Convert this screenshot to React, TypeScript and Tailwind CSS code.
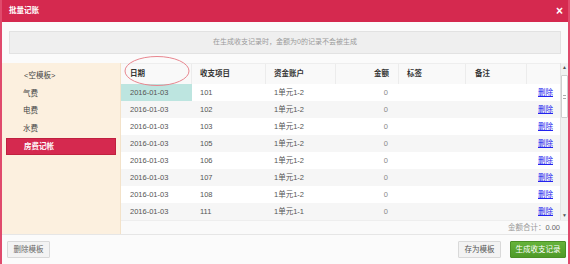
import React from 'react';

const templates = ['<空模板>', '气费', '电费', '水费', '房费记帐'];

const rows = [
  { date: '2016-01-03', item: '101', account: '1单元1-2' },
  { date: '2016-01-03', item: '102', account: '1单元1-2' },
  { date: '2016-01-03', item: '103', account: '1单元1-2' },
  { date: '2016-01-03', item: '105', account: '1单元1-2' },
  { date: '2016-01-03', item: '106', account: '1单元1-2' },
  { date: '2016-01-03', item: '107', account: '1单元1-2' },
  { date: '2016-01-03', item: '108', account: '1单元1-2' },
  { date: '2016-01-03', item: '111', account: '1单元1-1' },
];

const font = { fontFamily: '"Liberation Sans", "Noto Sans CJK SC", sans-serif' };

export default function App() {
  return (
    <div
      className="relative w-[570px] h-[264px] flex flex-col bg-[#fbfbfb] border-l-2 border-r-2 border-[#e04a6c] text-[7.5px] text-[#555] overflow-hidden"
      style={font}
    >
      {/* title bar */}
      <div className="h-[22px] -mx-[2px] bg-[#d5294f] flex items-center justify-between pl-[9px] pr-[7px] shrink-0">
        <span className="text-white font-bold">批量记账</span>
        <span className="text-white font-bold text-[12px] leading-none">×</span>
      </div>

      {/* notice */}
      <div className="mt-[9px] mx-[7px] h-[23px] bg-[#efefef] border border-[#e2e2e2] flex items-center justify-center text-[#9a9a9a] text-[7px]">
        在生成收支记录时，金额为0的记录不会被生成
      </div>

      {/* main */}
      <div className="mt-[9px] h-[172px] flex border-b border-[#e6e6e6] -ml-[2px]">
        {/* templates */}
        <div className="w-[121px] bg-[#fcf0df] pt-[4px] pl-[6px] pr-[4px] flex flex-col border-r border-[#f3e2c9]">
          {templates.map((t, i) => (
            <div
              key={t}
              className={
                i === templates.length - 1
                  ? 'h-[17px] mt-[1px] flex items-center pl-[17px] bg-[#d5294f] text-white font-bold border border-[#c0203f]'
                  : 'h-[17.5px] flex items-center pl-[17px] text-[#444]'
              }
            >
              {i === 0 ? <span className="pl-[1px]">{t}</span> : t}
            </div>
          ))}
        </div>

        {/* table */}
        <div className="flex-1 flex flex-col bg-white">
          <div className="flex h-[157px]">
            <div className="flex-1 flex flex-col">
              <div className="h-[21px] flex bg-[#f9f9f9] border-t border-[#eeeeee] text-[#333] font-bold">
                <div className="w-[71px] pl-[9px] flex items-center border-r border-[#ececec]">日期</div>
                <div className="w-[74px] pl-[8px] flex items-center border-r border-[#ececec]">收支项目</div>
                <div className="w-[70px] pl-[8px] flex items-center border-r border-[#ececec]">资金账户</div>
                <div className="w-[63px] pr-[9px] flex items-center justify-end border-r border-[#ececec]">金额</div>
                <div className="w-[67px] pl-[8px] flex items-center border-r border-[#ececec]">标签</div>
                <div className="w-[61px] pl-[9px] flex items-center border-r border-[#ececec]">备注</div>
                <div className="flex-1" />
              </div>
              {rows.map((r, i) => (
                <div key={r.item} className={`h-[17.2px] flex ${i % 2 === 1 ? 'bg-[#f6f6f6]' : 'bg-white'}`}>
                  <div className={`w-[71px] pl-[9px] flex items-center ${i === 0 ? 'bg-[#bde5e0]' : ''}`}>{r.date}</div>
                  <div className="w-[74px] pl-[8px] flex items-center">{r.item}</div>
                  <div className="w-[70px] pl-[8px] flex items-center">{r.account}</div>
                  <div className="w-[63px] pr-[11px] flex items-center justify-end text-[#888]">0</div>
                  <div className="w-[67px]" />
                  <div className="w-[61px]" />
                  <div className="flex-1 flex items-center pl-[11px]">
                    <a className="text-[#2323ee] underline">删除</a>
                  </div>
                </div>
              ))}
            </div>
            {/* scrollbar */}
            <div className="w-[8px] flex flex-col items-center bg-[#f1f1f1] border-l border-[#e3e3e3]">
              <div className="h-[9px] flex items-center text-[5px] text-[#555] leading-none">▲</div>
              <div className="mt-[3px] w-[7px] h-[43px] bg-white border border-[#cfcfcf] rounded-[1px] flex items-center justify-center">
                <div className="w-[3px] h-[4px] border-t border-b border-[#aaa]" />
              </div>
              <div className="flex-1" />
              <div className="h-[9px] flex items-center text-[5px] text-[#555] leading-none">▼</div>
            </div>
          </div>
          <div className="flex-1 bg-[#fafafa] border-t border-[#eeeeee] flex items-center justify-end pr-[8px] text-[#999]">
            金额合计：<span className="text-[#666]">0.00</span>
          </div>
        </div>
      </div>

      {/* footer buttons */}
      <div className="flex items-center mt-[6px] pl-[5px] pr-[2px]">
        <button className="h-[17px] w-[43px] bg-[#f3f3f3] border border-[#d9d9d9] rounded-[1px] text-[#666]">删除模板</button>
        <div className="flex-1" />
        <button className="h-[17px] w-[43px] bg-[#f3f3f3] border border-[#d9d9d9] rounded-[1px] text-[#555]">存为模板</button>
        <button className="ml-[9px] h-[17px] w-[56px] bg-gradient-to-b from-[#65b33a] to-[#4f9a28] border border-[#4a8f25] rounded-[1px] text-white">
          生成收支记录
        </button>
      </div>

      {/* annotation ellipse around 日期 */}
      <svg className="absolute left-[121px] top-[55px]" width="68" height="32" viewBox="0 0 68 32">
        <ellipse cx="34" cy="16" rx="32" ry="14.5" fill="none" stroke="#e8868f" strokeWidth="1" />
      </svg>
    </div>
  );
}
